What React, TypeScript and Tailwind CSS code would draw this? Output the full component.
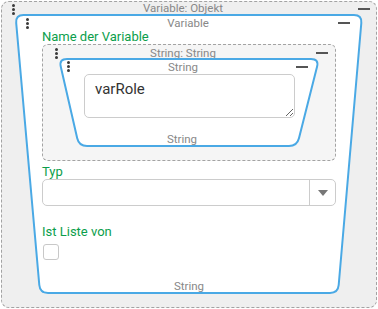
import React from 'react'

type Pt = [number, number]

// polygon with softened corners, used for the trapezoid frames
function roundedPath(pts: Pt[], r: number): string {
  const n = pts.length
  const toward = (from: Pt, to: Pt): Pt => {
    const dx = to[0] - from[0]
    const dy = to[1] - from[1]
    const len = Math.hypot(dx, dy)
    return [from[0] + (dx / len) * r, from[1] + (dy / len) * r]
  }
  let d = ''
  pts.forEach((p, i) => {
    const a = toward(p, pts[(i - 1 + n) % n])
    const b = toward(p, pts[(i + 1) % n])
    d += `${i === 0 ? 'M' : 'L'}${a[0]},${a[1]} Q${p[0]},${p[1]} ${b[0]},${b[1]} `
  })
  return d + 'Z'
}

function Trapezoid({ w, h, pts, r }: { w: number; h: number; pts: Pt[]; r: number }) {
  return (
    <svg className="absolute inset-0 pointer-events-none" width={w} height={h}>
      <path d={roundedPath(pts, r)} fill="#ffffff" stroke="#4aa9e5" strokeWidth={2} />
    </svg>
  )
}

function Dots({ className = '' }: { className?: string }) {
  return (
    <div className={`flex flex-col gap-px shrink-0 ${className}`}>
      <span className="block w-[3px] h-[3px] rounded-full bg-[#3a3a3a]" />
      <span className="block w-[3px] h-[3px] rounded-full bg-[#3a3a3a]" />
      <span className="block w-[3px] h-[3px] rounded-full bg-[#3a3a3a]" />
    </div>
  )
}

function Minus({ className = '' }: { className?: string }) {
  return <div className={`w-[12px] h-[2px] bg-[#555] shrink-0 ${className}`} />
}

const font = { fontFamily: 'Roboto, "Noto Sans", sans-serif' }

export default function App() {
  return (
    <div className="w-[378px] h-[309px] bg-white p-px" style={font}>
      <div className="w-[376px] h-[307px] border border-dashed border-[#a3a3a3] rounded-[8px] bg-[#efefef]">
        {/* object header */}
        <div className="flex items-start h-[12px]">
          <Dots className="ml-[10px] mt-[2px]" />
          <div className="flex-1 text-center text-[11.5px] leading-[13px] text-[#888] pr-[7px]">
            Variable: Objekt
          </div>
          <Minus className="mt-[6px] mr-[6px]" />
        </div>

        {/* Variable block */}
        <div className="relative ml-[12px] w-[350px] h-[281px]">
          <Trapezoid w={350} h={281} r={8} pts={[[1.5, 1], [348, 1], [324, 279], [26, 279]]} />
          <div className="relative">
            <div className="flex items-start h-[16px]">
              <Dots className="ml-[12px] mt-[4px]" />
              <div className="flex-1 text-center text-[11.5px] leading-[14px] pt-[2px] text-[#888] pl-[9px]">
                Variable
              </div>
              <Minus className="mt-[8px] mr-[14px]" />
            </div>

            <div className="ml-[28px] text-[13px] leading-[14px] text-[#0b9e4b]">Name der Variable</div>

            {/* String: String */}
            <div className="ml-[28px] w-[294px] h-[117px] border border-dashed border-[#a3a3a3] rounded-[6px] bg-[#f5f5f5]">
              <div className="flex items-start h-[13px]">
                <Dots className="ml-[12px] mt-[3px]" />
                <div className="flex-1 text-center text-[11.5px] leading-[14px] pt-[1px] text-[#888] pr-[8px]">
                  String: String
                </div>
                <Minus className="mt-[7px] mr-[7px]" />
              </div>

              <div className="relative ml-[14px] w-[264px] h-[90px]">
                <Trapezoid w={264} h={90} r={8} pts={[[2, 1], [262, 1], [240, 88], [22, 88]]} />
                <div className="relative">
                  <div className="flex items-start h-[16px]">
                    <Dots className="ml-[10px] mt-[3px]" />
                    <div className="flex-1 text-center text-[11.5px] leading-[16px] pt-[1px] text-[#888]">String</div>
                    <Minus className="mt-[8px] mr-[13px]" />
                  </div>
                  <textarea
                    readOnly
                    value="varRole"
                    className="block ml-[27px] w-[211px] h-[44px] border border-[#cccccc] rounded-[5px] bg-white pl-[10px] pt-[5px] text-[15px] leading-[18px] text-[#333] outline-none"
                    style={font}
                  />
                  <div className="mt-[14px] text-center text-[11.5px] leading-[14px] text-[#888] pr-[14px]">String</div>
                </div>
              </div>
            </div>

            <div className="ml-[28px] mt-[4px] text-[13px] leading-[14px] text-[#0b9e4b]">Typ</div>
            <div className="ml-[28px] w-[294px] h-[27px] flex border border-[#cccccc] rounded-[5px] bg-white">
              <div className="flex-1" />
              <div className="w-[26px] border-l border-[#cccccc] flex items-center justify-center">
                <svg width="10" height="6" viewBox="0 0 10 6">
                  <path d="M0 0 H10 L5 6 Z" fill="#777" />
                </svg>
              </div>
            </div>

            <div className="ml-[28px] mt-[19px] text-[13px] leading-[14px] text-[#0b9e4b]">Ist Liste von</div>
            <div className="ml-[29px] mt-[5px] w-[16px] h-[16px] border border-[#c8c8c8] rounded-[3px] bg-white" />

            <div className="mt-[19px] text-center text-[11.5px] leading-[14px] text-[#888]">String</div>
          </div>
        </div>
      </div>
    </div>
  )
}
